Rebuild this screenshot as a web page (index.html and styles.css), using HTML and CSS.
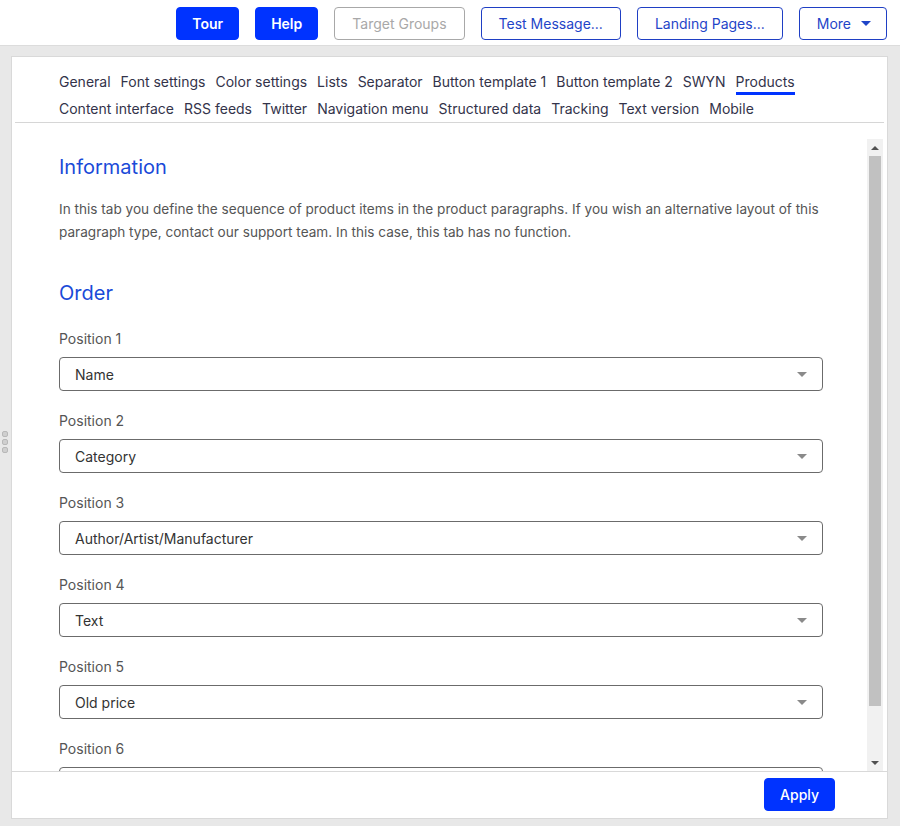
FILE: index.html
```html
<!DOCTYPE html>
<html lang="en">
<head>
    <meta charset="UTF-8">
    <meta name="viewport" content="width=device-width, initial-scale=1.0">
    <title>Layout settings - Products</title>
    <link rel="stylesheet" href="styles.css">
</head>
<body>
    <header class="topbar">
        <button class="btn btn-primary btn-small">Tour</button>
        <button class="btn btn-primary btn-small">Help</button>
        <button class="btn btn-disabled" disabled>Target Groups</button>
        <button class="btn btn-outline">Test Message...</button>
        <button class="btn btn-outline">Landing Pages...</button>
        <button class="btn btn-outline btn-more">More <span class="caret-down"></span></button>
    </header>

    <div class="main">
        <div class="grip">
            <span class="grip-dot"></span>
            <span class="grip-dot"></span>
            <span class="grip-dot"></span>
        </div>

        <div class="panel">
            <nav class="tabs">
                <a class="tab">General</a>
                <a class="tab">Font settings</a>
                <a class="tab">Color settings</a>
                <a class="tab">Lists</a>
                <a class="tab">Separator</a>
                <a class="tab">Button template 1</a>
                <a class="tab">Button template 2</a>
                <a class="tab">SWYN</a>
                <a class="tab active">Products</a>
                <a class="tab">Content interface</a>
                <a class="tab">RSS feeds</a>
                <a class="tab">Twitter</a>
                <a class="tab">Navigation menu</a>
                <a class="tab">Structured data</a>
                <a class="tab">Tracking</a>
                <a class="tab">Text version</a>
                <a class="tab">Mobile</a>
            </nav>

            <div class="content-row">
                <div class="scroll">
                    <h2 class="section-title">Information</h2>
                    <p class="info">In this tab you define the sequence of product items in the product paragraphs. If you wish an alternative layout of this paragraph type, contact our support team. In this case, this tab has no function.</p>

                    <h2 class="section-title order-title">Order</h2>

                    <div class="field">
                        <label class="field-label">Position 1</label>
                        <div class="select"><span>Name</span><span class="select-arrow"></span></div>
                    </div>
                    <div class="field">
                        <label class="field-label">Position 2</label>
                        <div class="select"><span>Category</span><span class="select-arrow"></span></div>
                    </div>
                    <div class="field">
                        <label class="field-label">Position 3</label>
                        <div class="select"><span>Author/Artist/Manufacturer</span><span class="select-arrow"></span></div>
                    </div>
                    <div class="field">
                        <label class="field-label">Position 4</label>
                        <div class="select"><span>Text</span><span class="select-arrow"></span></div>
                    </div>
                    <div class="field">
                        <label class="field-label">Position 5</label>
                        <div class="select"><span>Old price</span><span class="select-arrow"></span></div>
                    </div>
                    <div class="field">
                        <label class="field-label">Position 6</label>
                        <div class="select"><span>Price</span><span class="select-arrow"></span></div>
                    </div>
                </div>

                <div class="scrollbar">
                    <span class="sb-button"><span class="sb-arrow-up"></span></span>
                    <span class="sb-thumb"></span>
                    <span class="sb-track"></span>
                    <span class="sb-button"><span class="sb-arrow-down"></span></span>
                </div>
            </div>

            <div class="footer">
                <button class="btn btn-primary btn-apply">Apply</button>
            </div>
        </div>
    </div>
</body>
</html>
```

FILE: styles.css
```css
* {
    box-sizing: border-box;
}

body {
    margin: 0;
    height: 826px;
    font-family: Inter, 'Noto Sans', sans-serif;
    font-size: 14px;
    background-color: #e8e8e8;
    color: #333;
    display: flex;
    flex-direction: column;
    overflow: hidden;
}

/* Top toolbar */
.topbar {
    height: 46px;
    background-color: #fff;
    border-bottom: 1px solid #dcdcdc;
    display: flex;
    justify-content: flex-end;
    align-items: flex-start;
    gap: 16px;
    padding: 7px 13px 0 0;
}

.btn {
    height: 33px;
    padding: 0 17px;
    font-family: inherit;
    font-size: 14px;
    border-radius: 4px;
    border: 1px solid transparent;
    background: #fff;
    cursor: pointer;
    display: flex;
    align-items: center;
}

.btn-primary {
    background-color: #0033ff;
    border-color: #0033ff;
    color: #fff;
    font-weight: 600;
}

.btn-small {
    padding: 0 15px;
}

.btn-outline {
    border-color: #1f3fc4;
    color: #1f45c8;
}

.btn-disabled {
    border-color: #a8a8a8;
    color: #a8a8a8;
    cursor: default;
}

.btn-more {
    gap: 10px;
    padding: 0 15px 0 17px;
}

.caret-down {
    width: 0;
    height: 0;
    border-left: 5px solid transparent;
    border-right: 5px solid transparent;
    border-top: 5px solid #1f45c8;
}

/* Main area */
.main {
    flex: 1;
    display: flex;
    padding: 10px 12px 7px 0;
    min-height: 0;
}

.grip {
    width: 11px;
    display: flex;
    flex-direction: column;
    justify-content: center;
    align-items: center;
    gap: 2px;
    padding: 8px 1px 0 0;
}

.grip-dot {
    width: 6px;
    height: 6px;
    border-radius: 2px;
    background-color: #cfcfcf;
    border: 1px solid #b8b8b8;
}

.panel {
    flex: 1;
    background-color: #fff;
    border: 1px solid #d9d9d9;
    display: flex;
    flex-direction: column;
    min-height: 0;
}

/* Tabs */
.tabs {
    margin: 0 3px;
    padding: 11px 40px 0 44px;
    display: flex;
    flex-wrap: wrap;
    column-gap: 10px;
    border-bottom: 1px solid #d6d6d6;
}

.tab {
    line-height: 20px;
    padding-top: 4px;
    border-bottom: 3px solid transparent;
    color: #33334a;
    cursor: pointer;
    white-space: nowrap;
}

.tab.active {
    border-bottom-color: #0033ff;
}

/* Content + scrollbar */
.content-row {
    flex: 1;
    min-height: 0;
    margin-top: 16px;
    display: flex;
}

.scroll {
    flex: 1;
    min-width: 0;
    padding: 14px 44px 24px 47px;
    overflow: hidden;
}

.scrollbar {
    width: 16px;
    margin-right: 4px;
    background-color: #f1f1f1;
    display: flex;
    flex-direction: column;
}

.sb-button {
    height: 17px;
    display: flex;
    align-items: center;
    justify-content: center;
}

.sb-arrow-up,
.sb-arrow-down {
    width: 0;
    height: 0;
    border-left: 4px solid transparent;
    border-right: 4px solid transparent;
}

.sb-arrow-up {
    border-bottom: 4px solid #505050;
}

.sb-arrow-down {
    border-top: 4px solid #505050;
}

.sb-thumb {
    height: 550px;
    margin: 0 2px;
    background-color: #c1c1c1;
}

.sb-track {
    flex: 1;
}

.section-title {
    margin: 0;
    font-size: 20px;
    line-height: 28px;
    font-weight: 400;
    color: #1a4ad8;
}

.info {
    margin: 17px 0 0;
    font-size: 13.6px;
    line-height: 23px;
    color: #555;
}

.order-title {
    margin-top: 35px;
}

.field {
    margin-top: 22px;
}

.field + .field {
    margin-top: 20px;
}

.field-label {
    display: block;
    line-height: 20px;
    color: #555;
    margin-bottom: 8px;
}

.select {
    height: 34px;
    border: 1px solid #6b6b6b;
    border-radius: 4px;
    padding: 0 15px;
    display: flex;
    align-items: center;
    justify-content: space-between;
    color: #333;
}

.select-arrow {
    width: 0;
    height: 0;
    border-left: 5px solid transparent;
    border-right: 5px solid transparent;
    border-top: 5px solid #8a8a8a;
}

/* Footer */
.footer {
    border-top: 1px solid #d9d9d9;
    padding: 6px 52px 7px 0;
    display: flex;
    justify-content: flex-end;
}

.btn-apply {
    padding: 0 15px;
    font-weight: 500;
}
```
